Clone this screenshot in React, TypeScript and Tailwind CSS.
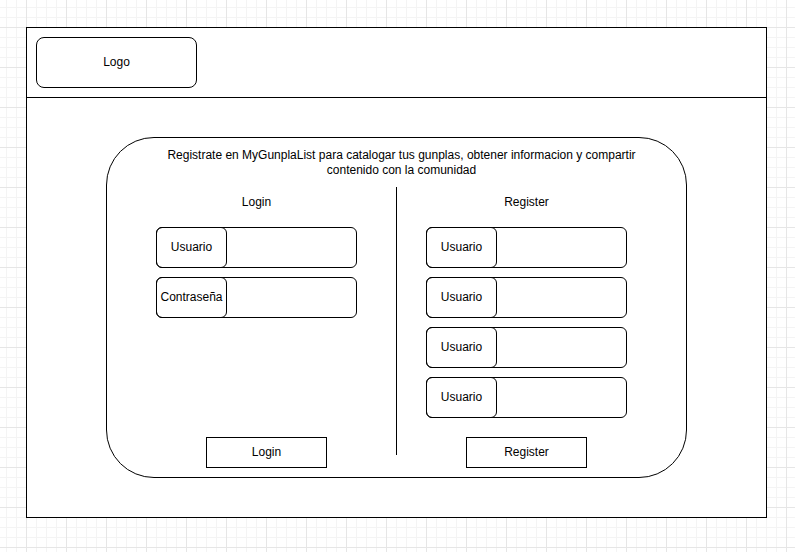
const font = { fontFamily: '"Liberation Sans", Arial, Helvetica, sans-serif' };

const Field = ({ label }: { label: string }) => (
  <div className="flex h-[41px] w-[201px] rounded-[6px] border border-black bg-white">
    <div className="-m-px flex h-[41px] w-[71px] shrink-0 items-center justify-center rounded-[6px] border border-black pb-[2px] text-[12px] leading-[14px] text-black">
      {label}
    </div>
  </div>
);

const Button = ({ children }: { children: string }) => (
  <div className="flex h-[31px] w-[121px] items-center justify-center border border-black bg-white pb-[2px] text-[12px] leading-[14px] text-black">
    {children}
  </div>
);

export default function App() {
  return (
    <div
      style={font}
      className="h-[552px] w-full overflow-hidden bg-white bg-[linear-gradient(to_right,#e6e6e6_1px,transparent_1px),linear-gradient(to_bottom,#e6e6e6_1px,transparent_1px),linear-gradient(to_right,#f4f4f4_1px,transparent_1px),linear-gradient(to_bottom,#f4f4f4_1px,transparent_1px)] bg-size-[40px_40px,40px_40px,10px_10px,10px_10px] bg-position-[26px_27px,26px_27px,6px_7px,6px_7px] pl-[26px] pt-[27px]"
    >
      <div className="flex h-[491px] w-[741px] flex-col border border-black bg-white">
        {/* header */}
        <div className="h-[70px] shrink-0 border-b border-black pl-[9px] pt-[9px]">
          <div className="flex h-[51px] w-[161px] items-center justify-center rounded-[8px] border border-black pb-[2px] text-[12px] leading-[14px] text-black">
            Logo
          </div>
        </div>

        {/* body */}
        <div className="pl-[79px] pt-[39px]">
          <div className="flex h-[341px] w-[581px] flex-col rounded-[48px] border border-black pb-[9px] pt-[10px]">
            <p className="pl-[10px] text-center text-[12px] leading-[15px] text-black">
              Registrate en MyGunplaList para catalogar tus gunplas, obtener informacion y compartir
              <br />
              contenido con la comunidad
            </p>

            <div className="mt-[9px] flex flex-1">
              {/* login */}
              <div className="ml-[49px] flex w-[201px] flex-col">
                <div className="mt-[8px] text-center text-[12px] leading-[14px] text-black">Login</div>
                <div className="mt-[18px] flex flex-col gap-[9px]">
                  <Field label="Usuario" />
                  <Field label="Contraseña" />
                </div>
                <div className="ml-[50px] mt-auto">
                  <Button>Login</Button>
                </div>
              </div>

              <div className="ml-[39px] h-[268px] w-px bg-black" />

              {/* register */}
              <div className="ml-[29px] flex w-[201px] flex-col">
                <div className="mt-[8px] text-center text-[12px] leading-[14px] text-black">Register</div>
                <div className="mt-[18px] flex flex-col gap-[9px]">
                  <Field label="Usuario" />
                  <Field label="Usuario" />
                  <Field label="Usuario" />
                  <Field label="Usuario" />
                </div>
                <div className="ml-[40px] mt-auto">
                  <Button>Register</Button>
                </div>
              </div>
            </div>
          </div>
        </div>
      </div>
    </div>
  );
}
